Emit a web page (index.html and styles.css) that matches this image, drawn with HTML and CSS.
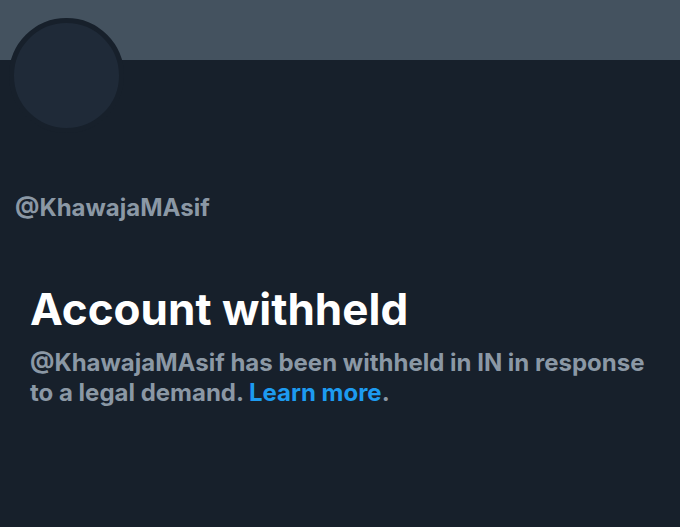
FILE: index.html
```html
<!DOCTYPE html>
<html lang="en">
  <head>
    <meta charset="UTF-8">
    <meta name="viewport" content="width=device-width, initial-scale=1.0">
    <title>Account withheld</title>
    <link rel="stylesheet" href="styles.css">
  </head>
  <body>
    <div class="profile">
      <div class="banner"></div>
      <div class="avatar"></div>
      <div class="handle">@KhawajaMAsif</div>
      <div class="notice">
        <h1>Account withheld</h1>
        <p>@KhawajaMAsif has been withheld in IN in response to a legal demand. <a href="#">Learn more</a>.</p>
      </div>
    </div>
  </body>
</html>
```

FILE: styles.css
```css
:root {
  --bg: #17202b;
  --banner: #44525f;
  --avatar: #1f2a38;
  --muted: #8b98a5;
  --link: #1d9bf0;
}

* {
  box-sizing: border-box;
}

html,
body {
  height: 100%;
}

body {
  margin: 0;
  background: var(--bg);
  font-family: Inter, 'Liberation Sans', sans-serif;
  color: #fff;
  overflow: hidden;
}

.banner {
  height: 60px;
  background: var(--banner);
}

.avatar {
  width: 115px;
  height: 115px;
  margin: -42px 0 0 9px;
  border-radius: 50%;
  background: var(--avatar);
  border: 5px solid var(--bg);
}

.handle {
  margin-top: 60px;
  padding-left: 15px;
  font-size: 24px;
  line-height: 30px;
  font-weight: 700;
  color: var(--muted);
}

.notice {
  padding: 0 30px;
  margin-top: 60px;
}

.notice h1 {
  margin: 0 0 13px;
  font-size: 44px;
  font-weight: 700;
  line-height: 52px;
}

.notice p {
  margin: 0;
  font-size: 24px;
  font-weight: 700;
  line-height: 30px;
  color: var(--muted);
}

.notice a {
  color: var(--link);
  text-decoration: none;
}
```
